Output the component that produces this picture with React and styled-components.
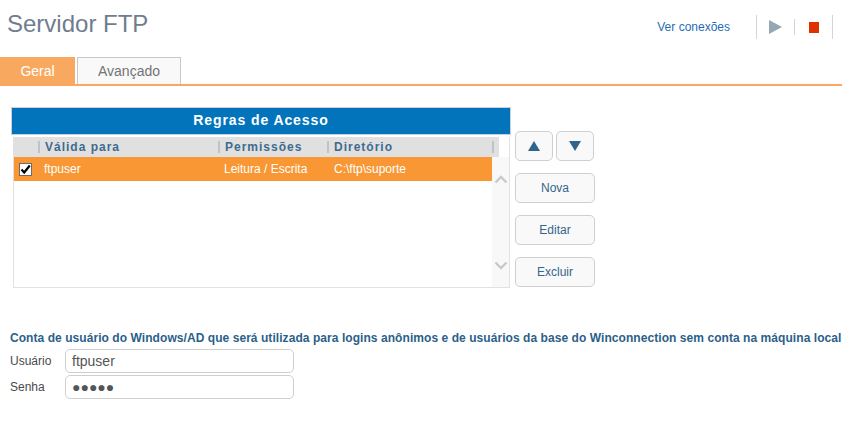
import React from "react";
import styled, { createGlobalStyle } from "styled-components";

const Global = createGlobalStyle`
  html, body { margin: 0; padding: 0; background: #fff; }
  body { font-family: "Liberation Sans", Arial, sans-serif; }
`;
const Page = styled.div`width: 842px; height: 436px; overflow: hidden; display: flex; flex-direction: column;`;
const Header = styled.header`height: 57px; display: flex; justify-content: space-between; box-sizing: border-box; padding: 10px 9px 0 7px;`;
const Title = styled.h1`margin: 0; font-size: 24px; line-height: 28px; font-weight: 400; color: #6f7d8f;`;
const Actions = styled.div`display: flex; align-items: center; height: 24px; margin-top: 5px;`;
const ConnLink = styled.a`font-size: 12px; color: #1f6db5; margin-right: 26px;`;
const Sep = styled.span`width: 1px; height: ${p => p.$h || 24}px; background: #d4d4d4;`;
const IconBtn = styled.span`display: flex; align-items: center; justify-content: center; width: ${p => p.$w}px; height: 24px;`;
const Tabs = styled.nav`height: 29px; box-sizing: border-box; display: flex; gap: 2px; border-bottom: 2px solid #f9a95f; align-items: flex-end;`;
const Tab = styled.div`
  height: 27px; box-sizing: border-box; width: ${p => p.$w}px; display: flex; align-items: center; justify-content: center;
  font-size: 14px; background: ${p => p.$active ? "#f9a95f" : "#f9f9f9"}; color: ${p => p.$active ? "#fff" : "#747474"};
  border: ${p => p.$active ? "none" : "1px solid #c8c8c8"}; border-bottom: none;
`;
const Content = styled.main`display: flex; padding: 21px 0 0 11px; height: 216px; box-sizing: border-box;`;
const Panel = styled.section`width: 500px; display: flex; flex-direction: column;`;
const PanelTitle = styled.div`
  height: 28px; box-sizing: border-box; background: #0274bc; border: 1px solid #c5d0d8; color: #fff;
  font-weight: 700; font-size: 14px; letter-spacing: 0.9px; display: flex; align-items: center; justify-content: center; padding-bottom: 2px;
`;
const Frame = styled.div`
  margin: 2px 0 0 2px; width: 497px; height: 151px; box-sizing: border-box; border: 1px solid #e2e2e2; border-top: none; display: flex; flex-direction: column;
`;
const HeadRow = styled.div`width: 486px; height: 20px; background: #e0e0e0; display: flex; align-items: center; margin-left: -1px; flex: none;`;
const HeadCell = styled.div`
  width: ${p => p.$w}px; box-sizing: border-box; padding-left: ${p => p.$pl || 0}px; font-size: 12px; font-weight: 700; letter-spacing: 1px; color: #3f6a8f; white-space: nowrap;
  display: flex; align-items: center;
`;
const HeadBar = styled.i`width: 2px; height: 12px; background: #bcc3c9; margin-right: 5px; flex: none;`;
const Body = styled.div`flex: 1; display: flex; min-height: 0;`;
const Rows = styled.div`flex: 1;`;
const Row = styled.div`height: 24px; background: #f89733; display: flex; align-items: center; color: #fff; font-size: 12px;`;
const CheckCell = styled.div`width: 30px; box-sizing: border-box; padding-left: 5px; display: flex;`;
const Check = styled.span`width: 13px; height: 13px; box-sizing: border-box; background: #fff; border: 1px solid #6b6b6b; display: flex;`;
const Cell = styled.div`width: ${p => p.$w}px; white-space: nowrap;`;
const Scroll = styled.div`width: 17px; background: #f8f8f8; display: flex; flex-direction: column; justify-content: space-between; align-items: center; padding: 18px 0 17px; box-sizing: border-box;`;
const Side = styled.aside`margin-left: 4px; padding-top: 24px; display: flex; flex-direction: column; gap: 12px;`;
const ArrowRow = styled.div`display: flex; gap: 3px;`;
const Btn = styled.button`
  width: ${p => p.$w || 80}px; height: 30px; padding: 0; box-sizing: border-box; background: #f9f9f9; border: 1px solid #cfcfcf; border-radius: 5px;
  color: #35658c; font: 12px "Liberation Sans", Arial, sans-serif; display: flex; align-items: center; justify-content: center;
`;
const Account = styled.section`padding: 29px 0 0 10px;`;
const Note = styled.div`font-size: 12px; font-weight: 700; color: #2b5f8a; line-height: 14px; white-space: nowrap; letter-spacing: 0.005em;`;
const Field = styled.div`display: flex; align-items: center; margin-top: ${p => p.$mt}px;`;
const Label = styled.label`width: 55px; font-size: 12px; color: #4a4a4a;`;
const Input = styled.div`
  width: 229px; height: 24px; box-sizing: border-box; border: 1px solid #cfcfcf; border-radius: 5px; padding-left: 6px;
  font-size: 14px; color: #555; display: flex; align-items: center; letter-spacing: ${p => p.$ls || 0}px;
`;

export default function App() {
  return (
    <Page>
      <Global />
      <Header>
        <Title>Servidor FTP</Title>
        <Actions>
          <ConnLink>Ver conexões</ConnLink>
          <Sep />
          <IconBtn $w={37}>
            <svg width="13" height="14" viewBox="0 0 13 14"><path d="M0 0L13 7L0 14Z" fill="#93a8b2" /></svg>
          </IconBtn>
          <Sep $h={16} />
          <IconBtn $w={37}>
            <svg width="10" height="11" viewBox="0 0 10 11"><rect width="10" height="11" fill="#e02f00" /></svg>
          </IconBtn>
          <Sep />
        </Actions>
      </Header>
      <Tabs>
        <Tab $active $w={75}>Geral</Tab>
        <Tab $w={104}>Avançado</Tab>
      </Tabs>
      <Content>
        <Panel>
          <PanelTitle>Regras de Acesso</PanelTitle>
          <Frame>
            <HeadRow>
              <HeadCell $w={205} $pl={25}><HeadBar />Válida para</HeadCell>
              <HeadCell $w={109}><HeadBar />Permissões</HeadCell>
              <HeadCell $w={165}><HeadBar />Diretório</HeadCell>
              <HeadBar />
            </HeadRow>
            <Body>
              <Rows>
                <Row>
                  <CheckCell>
                    <Check>
                      <svg width="11" height="11" viewBox="0 0 11 11"><path d="M1.5 5.5L4.2 8.5L9.8 1.5" fill="none" stroke="#000" strokeWidth="2.2" /></svg>
                    </Check>
                  </CheckCell>
                  <Cell $w={180}>ftpuser</Cell>
                  <Cell $w={110}>Leitura / Escrita</Cell>
                  <Cell $w={150}>C:\ftp\suporte</Cell>
                </Row>
              </Rows>
              <Scroll>
                <svg width="14" height="9" viewBox="0 0 14 9"><path d="M1.5 7.5L7 2L12.5 7.5" fill="none" stroke="#c9c9c9" strokeWidth="2.4" /></svg>
                <svg width="14" height="9" viewBox="0 0 14 9"><path d="M1.5 1.5L7 7L12.5 1.5" fill="none" stroke="#c9c9c9" strokeWidth="2.4" /></svg>
              </Scroll>
            </Body>
          </Frame>
        </Panel>
        <Side>
          <ArrowRow>
            <Btn $w={38}><svg width="12" height="10" viewBox="0 0 12 10"><path d="M6 0L12 10H0Z" fill="#30648c" /></svg></Btn>
            <Btn $w={38}><svg width="12" height="10" viewBox="0 0 12 10"><path d="M0 0H12L6 10Z" fill="#30648c" /></svg></Btn>
          </ArrowRow>
          <Btn>Nova</Btn>
          <Btn>Editar</Btn>
          <Btn>Excluir</Btn>
        </Side>
      </Content>
      <Account>
        <Note>Conta de usuário do Windows/AD que será utilizada para logins anônimos e de usuários da base do Winconnection sem conta na máquina local</Note>
        <Field $mt={4}><Label>Usuário</Label><Input>ftpuser</Input></Field>
        <Field $mt={2}><Label>Senha</Label><Input $ls={0}>●●●●●</Input></Field>
      </Account>
    </Page>
  );
}
